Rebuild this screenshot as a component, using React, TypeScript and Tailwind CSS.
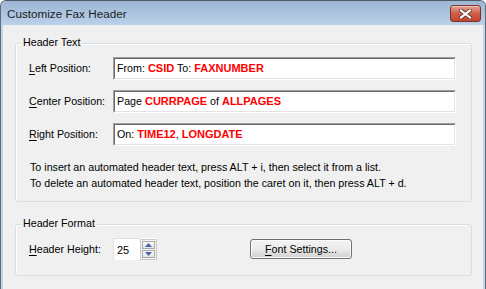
import React from 'react';

const Key: React.FC<{ children: React.ReactNode }> = ({ children }) => (
  <span className="underline underline-offset-[2px]">{children}</span>
);

const Red: React.FC<{ children: React.ReactNode }> = ({ children }) => (
  <span className="font-bold text-[#ff0000] text-[11px]">{children}</span>
);

// sunken classic edit box
const Edit: React.FC<{ children: React.ReactNode }> = ({ children }) => (
  <div className="h-[23px] w-[343px] border border-t-[#a0a0a0] border-l-[#a0a0a0] border-b-white border-r-white">
    <div className="h-full border border-t-[#696969] border-l-[#696969] border-b-[#e3e3e3] border-r-[#e3e3e3] bg-white pl-[2px] flex items-center whitespace-pre">
      {children}
    </div>
  </div>
);

const GroupBox: React.FC<{ title: string; className: string; children: React.ReactNode }> = ({
  title,
  className,
  children
}) => (
  <div
    className={`relative ml-[12px] w-[457px] border border-[#d5dfe5] rounded-[3px] shadow-[inset_1px_1px_0_#ffffff] ${className}`}
  >
    <span className="absolute left-[5px] top-[-8px] px-[2px] bg-[#f0f0f0] leading-[13px]">{title}</span>
    {children}
  </div>
);

export default function App() {
  return (
    <div className="w-[486px] h-[289px] overflow-hidden bg-[#c2d6eb] border-x border-t border-x-[#5d6b7a] border-t-[#4d5a68] rounded-t-[6px] flex flex-col font-['Liberation_Sans',Arial,sans-serif] text-[10.7px] text-black">
      {/* Title bar */}
      <div className="h-[24px] shrink-0 flex justify-between bg-gradient-to-b from-[#9cb6d3] to-[#bad1ea] rounded-t-[5px]">
        <span className="pl-[6px] pt-[5px] text-[11.7px] leading-[15px] text-[#1e1e1e]">Customize Fax Header</span>
        <div className="mt-[4px] mr-[4px] w-[31px] h-[17px] rounded-[3px] border border-[#7a3429] bg-gradient-to-b from-[#e6a091] via-[#cf5f4b] to-[#c2452f] shadow-[inset_0_1px_0_rgba(255,255,255,0.45)] flex items-center justify-center">
          <svg width="13" height="10" viewBox="0 0 13 10">
            <path d="M2 1.5 L11 8.5 M11 1.5 L2 8.5" stroke="#6b3a33" strokeWidth="4" strokeLinecap="square" />
            <path d="M2 1.5 L11 8.5 M11 1.5 L2 8.5" stroke="#ffffff" strokeWidth="2.2" strokeLinecap="square" />
          </svg>
        </div>
      </div>

      {/* Client area */}
      <div className="mx-[2px] flex-1 bg-[#f0f0f0] flex flex-col">
        <GroupBox title="Header Text" className="mt-[18px] h-[159px] pl-[13px] pt-[13px]">
          <div className="flex flex-col gap-[10px]">
            <div className="flex items-center">
              <span className="w-[84px]">
                <Key>L</Key>eft Position:
              </span>
              <Edit>
                From: <Red>CSID</Red> To: <Red>FAXNUMBER</Red>
              </Edit>
            </div>
            <div className="flex items-center">
              <span className="w-[84px]">
                <Key>C</Key>enter Position:
              </span>
              <Edit>
                Page <Red>CURRPAGE</Red> of <Red>ALLPAGES</Red>
              </Edit>
            </div>
            <div className="flex items-center">
              <span className="w-[84px]">
                <Key>R</Key>ight Position:
              </span>
              <Edit>
                On: <Red>TIME12</Red>, <Red>LONGDATE</Red>
              </Edit>
            </div>
          </div>
          <div className="mt-[13px] pl-[1px] leading-[16px]">
            <p>To insert an automated header text, press ALT + i, then select it from a list.</p>
            <p>To delete an automated header text, position the caret on it, then press ALT + d.</p>
          </div>
        </GroupBox>

        <GroupBox title="Header Format" className="mt-[22px] h-[52px] pl-[13px] pt-[13px]">
          <div className="flex items-center h-[22px]">
            <span className="w-[84px]">
              <Key>H</Key>eader Height:
            </span>
            <div className="h-[22px] w-[27px] bg-white border-t border-l border-[#e0e0e0] pl-[3px] flex items-start pt-[3px] text-[11px]">
              25
            </div>
            <div className="h-[22px] w-[17px] bg-white flex flex-col justify-center">
              <div className="border border-[#c8c8c8] p-[1px] flex flex-col gap-[1px] bg-[#f4f4f4]">
                <div className="h-[8px] border border-[#a8a8a8] bg-gradient-to-b from-[#fafafa] to-[#e4e4e4] flex items-center justify-center">
                  <svg width="7" height="4" viewBox="0 0 7 4">
                    <path d="M0 4 L3.5 0 L7 4 Z" fill="#4b62a8" />
                  </svg>
                </div>
                <div className="h-[8px] border border-[#a8a8a8] bg-gradient-to-b from-[#fafafa] to-[#e4e4e4] flex items-center justify-center">
                  <svg width="7" height="4" viewBox="0 0 7 4">
                    <path d="M0 0 L7 0 L3.5 4 Z" fill="#4b62a8" />
                  </svg>
                </div>
              </div>
            </div>
            <button className="ml-[93px] h-[20px] w-[102px] rounded-[3px] border border-[#707070] bg-gradient-to-b from-[#f2f2f2] via-[#ebebeb] to-[#cfcfcf] shadow-[inset_0_0_0_1px_#fcfcfc] leading-[13px]">
              <Key>F</Key>ont Settings...
            </button>
          </div>
        </GroupBox>
      </div>
    </div>
  );
}
